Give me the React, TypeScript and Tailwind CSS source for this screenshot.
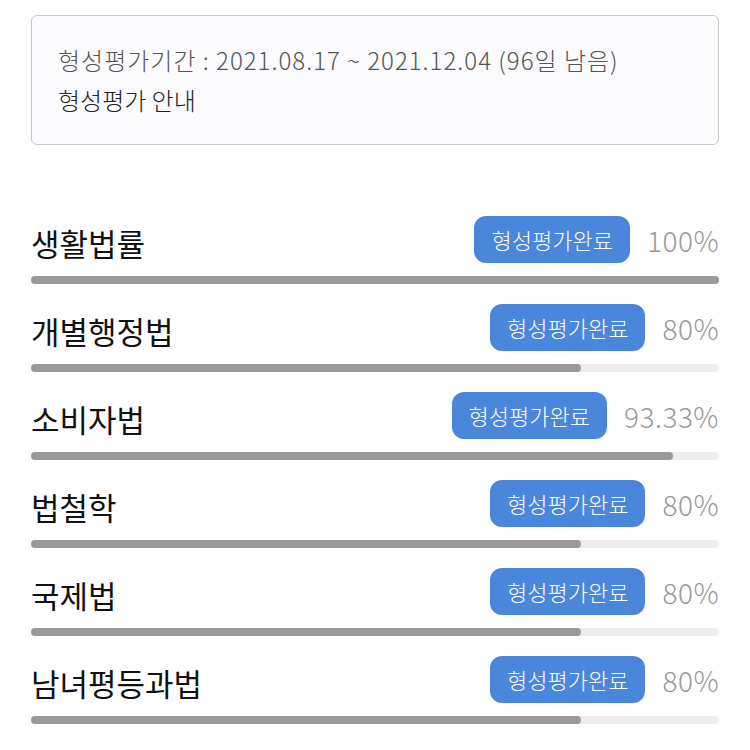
import React from "react";

interface Subject {
  name: string;
  percent: number;
  label: string;
}

const subjects: Subject[] = [
  { name: "생활법률", percent: 100, label: "100%" },
  { name: "개별행정법", percent: 80, label: "80%" },
  { name: "소비자법", percent: 93.33, label: "93.33%" },
  { name: "법철학", percent: 80, label: "80%" },
  { name: "국제법", percent: 80, label: "80%" },
  { name: "남녀평등과법", percent: 80, label: "80%" },
];

const font = { fontFamily: '"Noto Sans CJK KR", "Noto Sans", sans-serif' };

const SubjectRow: React.FC<{ item: Subject }> = ({ item }) => {
  return (
    <div>
      <div className="flex h-[47px] items-center justify-between">
        <span className="pt-[6px] text-[31px] leading-none text-[#111]">{item.name}</span>
        <div className="flex items-center">
          <span className="flex h-[47px] items-center rounded-[12px] bg-[#4a86dc] px-[17px] text-[22px] font-light text-white">
            형성평가완료
          </span>
          <span className="ml-[17px] text-[28px] font-light tracking-[0.5px] text-[#999]">{item.label}</span>
        </div>
      </div>
      <div className="mt-[13px] h-[8px] w-full rounded-full bg-[#eeeef0]">
        <div
          className="h-full rounded-full bg-[#9a9a9c]"
          style={{ width: `${item.percent}%` }}
        />
      </div>
    </div>
  );
};

const App: React.FC = () => {
  return (
    <div className="min-h-[750px] bg-white px-[31px] pt-[15px]" style={font}>
      <div className="flex h-[130px] flex-col justify-center rounded-[6px] border-[1.5px] border-[#c8c8c8] bg-[#fbfafd] pl-[26px]">
        <p className="text-[24px] font-light leading-[40px] tracking-[1px] text-[#555]">
          형성평가기간 : 2021.08.17 ~ 2021.12.04 (96일 남음)
        </p>
        <p className="text-[24px] font-light leading-[40px] text-[#222]">형성평가 안내</p>
      </div>

      <div className="mt-[71px] flex flex-col gap-[20px]">
        {subjects.map((s) => (
          <SubjectRow key={s.name} item={s} />
        ))}
      </div>
    </div>
  );
};

export default App;
